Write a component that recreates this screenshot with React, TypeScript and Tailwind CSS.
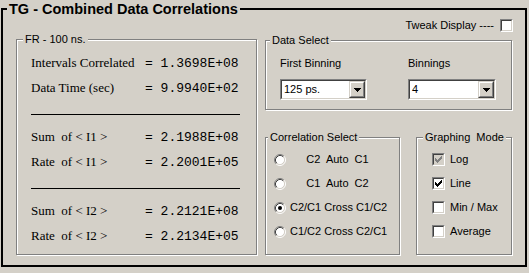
import type { ReactNode } from "react";

const sans = "font-['Liberation_Sans',Arial,sans-serif]";
const serif = "font-['Liberation_Serif','Times_New_Roman',serif]";
const mono = "font-['Liberation_Mono','Courier_New',monospace]";

function GroupBox({
  title,
  labelPos,
  className,
  children,
}: {
  title: string;
  labelPos: string;
  className: string;
  children?: ReactNode;
}) {
  return (
    <div
      className={`relative border border-[#808080] shadow-[1px_1px_0_#fff,inset_1px_1px_0_#fff] ${className}`}
    >
      <span
        className={`absolute -top-[7px] ${labelPos} whitespace-pre bg-[#d4d0c8] px-[2px] text-[11px] leading-[13px] text-black ${sans}`}
      >
        {title}
      </span>
      {children}
    </div>
  );
}

function CheckMark({ color }: { color: string }) {
  return (
    <svg width="7" height="7" viewBox="0 0 7 7" shapeRendering="crispEdges">
      <path
        fill={color}
        d="M6 0h1v1h-1z M5 1h2v1h-2z M0 2h1v1h-1z M4 2h3v1h-3z M0 3h2v1h-2z M3 3h3v1h-3z M0 4h5v1h-5z M1 5h3v1h-3z M2 6h1v1h-1z"
      />
    </svg>
  );
}

function CheckBox({ checked, disabled }: { checked?: boolean; disabled?: boolean }) {
  return (
    <div className="h-[13px] w-[13px] shrink-0 border border-b-white border-l-[#808080] border-r-white border-t-[#808080]">
      <div
        className={`flex h-full w-full items-center justify-center border border-b-[#d4d0c8] border-l-[#404040] border-r-[#d4d0c8] border-t-[#404040] ${
          disabled ? "bg-[#d4d0c8]" : "bg-white"
        }`}
      >
        {checked && <CheckMark color={disabled ? "#808080" : "#000"} />}
      </div>
    </div>
  );
}

function Radio({ checked }: { checked?: boolean }) {
  return (
    <svg width="12" height="12" viewBox="0 0 12 12" className="shrink-0">
      <circle cx="6" cy="6" r="4.5" fill="#fff" />
      <path d="M2.11 9.89 A5.5 5.5 0 0 1 9.89 2.11" fill="none" stroke="#808080" />
      <path d="M9.89 2.11 A5.5 5.5 0 0 1 2.11 9.89" fill="none" stroke="#fff" />
      <path d="M2.82 9.18 A4.5 4.5 0 0 1 9.18 2.82" fill="none" stroke="#404040" />
      <path d="M9.18 2.82 A4.5 4.5 0 0 1 2.82 9.18" fill="none" stroke="#d4d0c8" />
      {checked && <circle cx="6" cy="6" r="2" fill="#000" />}
    </svg>
  );
}

function Combo({ value, width }: { value: string; width: string }) {
  return (
    <div className={`h-[21px] ${width} border border-b-white border-l-[#808080] border-r-white border-t-[#808080]`}>
      <div className="flex h-full w-full border border-b-[#d4d0c8] border-l-[#404040] border-r-[#d4d0c8] border-t-[#404040] bg-white">
        <span className={`flex-1 pl-[2px] text-[11px] leading-[17px] text-black ${sans}`}>{value}</span>
        <div className="h-[17px] w-[16px] border border-b-[#404040] border-l-[#d4d0c8] border-r-[#404040] border-t-[#d4d0c8]">
          <div className="flex h-full w-full items-center justify-center border border-b-[#808080] border-l-white border-r-[#808080] border-t-white bg-[#d4d0c8]">
            <svg width="7" height="4" viewBox="0 0 7 4" shapeRendering="crispEdges">
              <path fill="#000" d="M0 0h7v1h-7z M1 1h5v1h-5z M2 2h3v1h-3z M3 3h1v1h-1z" />
            </svg>
          </div>
        </div>
      </div>
    </div>
  );
}

function StatRow({ label, value, className }: { label: string; value: string; className: string }) {
  return (
    <div className={`flex items-baseline leading-[16px] text-black ${className}`}>
      <span className={`w-[114px] whitespace-pre text-[13px] ${serif}`}>{label}</span>
      <span className={`whitespace-pre text-[13px] ${mono}`}>= {value}</span>
    </div>
  );
}

const radios = [
  { label: "C2  Auto  C1", checked: false },
  { label: "C1  Auto  C2", checked: false },
  { label: "C2/C1 Cross C1/C2", checked: true },
  { label: "C1/C2 Cross C2/C1", checked: false },
];

const modes = [
  { label: "Log", checked: true, disabled: true },
  { label: "Line", checked: true, disabled: false },
  { label: "Min / Max", checked: false, disabled: false },
  { label: "Average", checked: false, disabled: false },
];

export default function App() {
  return (
    <div className="h-[273px] w-[529px] overflow-hidden bg-[#d4d0c8] pl-[1px] pt-[8px]">
      <div className="relative flex h-[259px] w-[526px] border-2 border-black">
        <span
          className={`absolute -top-[9px] left-[4px] bg-[#d4d0c8] px-[2px] text-[14.5px] font-bold leading-[17px] text-black ${sans}`}
        >
          TG - Combined Data Correlations
        </span>

        {/* left stats panel */}
        <GroupBox
          title="FR - 100 ns."
          labelPos="left-[6px]"
          className="ml-[13px] mt-[29px] h-[216px] w-[241px] shrink-0"
        >
          <div className="flex flex-col pl-[14px]">
            <StatRow className="mt-[15px]" label="Intervals Correlated" value="1.3698E+08" />
            <StatRow className="mt-[8px]" label="Data Time (sec)" value="9.9940E+02" />
            <div className="mt-[17px] h-px w-[209px] bg-black" />
            <StatRow className="mt-[14px]" label="Sum  of < I1 >" value="2.1988E+08" />
            <StatRow className="mt-[8px]" label="Rate  of < I1 >" value="2.2001E+05" />
            <div className="mt-[17px] h-px w-[209px] bg-black" />
            <StatRow className="mt-[14px]" label="Sum  of < I2 >" value="2.2121E+08" />
            <StatRow className="mt-[8px]" label="Rate  of < I2 >" value="2.2134E+05" />
          </div>
        </GroupBox>

        {/* right column */}
        <div className="ml-[8px] flex w-[248px] flex-col">
          <div className="mt-[9px] flex items-center justify-end">
            <span className={`text-[11px] leading-[13px] text-black ${sans}`}>Tweak Display ----</span>
            <div className="ml-[6px]">
              <CheckBox />
            </div>
          </div>

          <GroupBox title="Data Select" labelPos="left-[4px]" className="mt-[8px] h-[70px] w-[247px]">
            <div className={`mt-[16px] flex text-[11px] leading-[13px] text-black ${sans}`}>
              <div className="ml-[14px] flex flex-col">
                <span>First Binning</span>
                <div className="mt-[9px]">
                  <Combo value="125 ps." width="w-[87px]" />
                </div>
              </div>
              <div className="ml-[41px] flex flex-col">
                <span>Binnings</span>
                <div className="mt-[9px]">
                  <Combo value="4" width="w-[88px]" />
                </div>
              </div>
            </div>
          </GroupBox>

          <div className="mt-[27px] flex">
            <GroupBox title="Correlation Select" labelPos="left-[2px]" className="h-[118px] w-[135px]">
              <div className="mt-[15px] flex flex-col gap-[11px]">
                {radios.map((r) => (
                  <div key={r.label} className="flex h-[13px] items-center pl-[8px]">
                    <Radio checked={r.checked} />
                    <span
                      className={`ml-[4px] w-[95px] whitespace-pre text-center text-[11px] leading-[13px] text-black ${sans}`}
                    >
                      {r.label}
                    </span>
                  </div>
                ))}
              </div>
            </GroupBox>

            <GroupBox title="Graphing  Mode" labelPos="left-[6px]" className="ml-[16px] h-[118px] w-[96px]">
              <div className="mt-[15px] flex flex-col gap-[11px]">
                {modes.map((m) => (
                  <div key={m.label} className="flex h-[13px] items-center pl-[15px]">
                    <CheckBox checked={m.checked} disabled={m.disabled} />
                    <span className={`ml-[5px] whitespace-pre text-[11px] leading-[13px] text-black ${sans}`}>
                      {m.label}
                    </span>
                  </div>
                ))}
              </div>
            </GroupBox>
          </div>
        </div>
      </div>
    </div>
  );
}
